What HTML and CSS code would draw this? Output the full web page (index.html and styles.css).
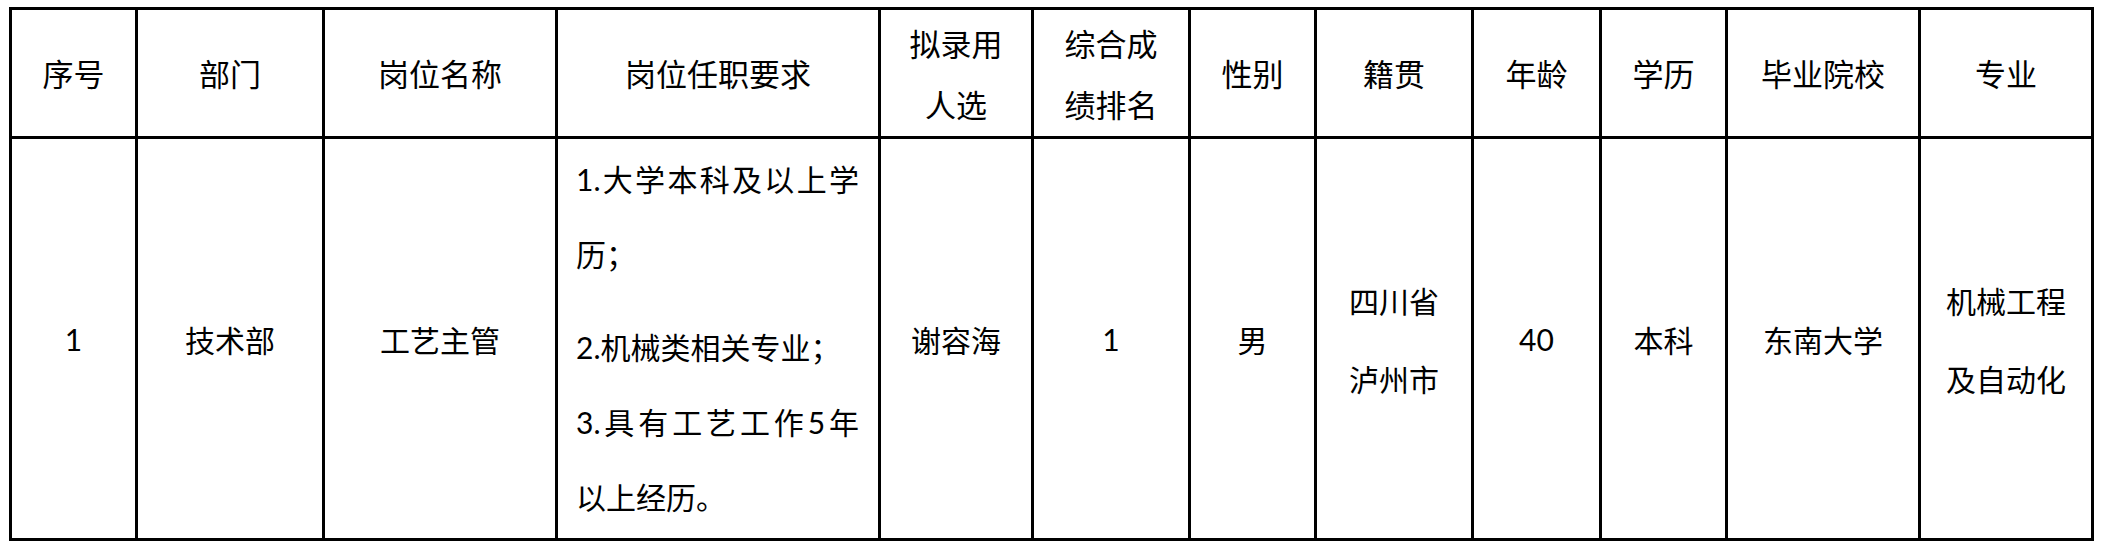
FILE: index.html
```html
<!DOCTYPE html>
<html lang="zh-CN">
<head>
<meta charset="utf-8">
<title>拟录用人选公示</title>
<link rel="stylesheet" href="styles.css">
</head>
<body>
<table class="sheet">
  <colgroup>
    <col class="col-no">
    <col class="col-dept">
    <col class="col-post">
    <col class="col-req">
    <col class="col-name">
    <col class="col-rank">
    <col class="col-sex">
    <col class="col-origin">
    <col class="col-age">
    <col class="col-edu">
    <col class="col-school">
    <col class="col-major">
  </colgroup>
  <thead>
    <tr>
      <th>序号</th>
      <th>部门</th>
      <th>岗位名称</th>
      <th>岗位任职要求</th>
      <th class="two">拟录用<br>人选</th>
      <th class="two">综合成<br>绩排名</th>
      <th>性别</th>
      <th>籍贯</th>
      <th>年龄</th>
      <th>学历</th>
      <th>毕业院校</th>
      <th>专业</th>
    </tr>
  </thead>
  <tbody>
    <tr>
      <td class="num">1</td>
      <td>技术部</td>
      <td>工艺主管</td>
      <td class="req">
        <div class="req-line req-line--justify">1.大学本科及以上学</div>
        <div class="req-line">历；</div>
        <div class="req-line req-line--gap">2.机械类相关专业；</div>
        <div class="req-line req-line--justify">3.具有工艺工作5年</div>
        <div class="req-line">以上经历。</div>
      </td>
      <td>谢容海</td>
      <td class="num">1</td>
      <td>男</td>
      <td class="two">四川省<br>泸州市</td>
      <td class="num">40</td>
      <td>本科</td>
      <td>东南大学</td>
      <td class="two">机械工程<br>及自动化</td>
    </tr>
  </tbody>
</table>
</body>
</html>
```

FILE: styles.css
```css
html, body {
  margin: 0;
  padding: 0;
  background: #ffffff;
}

body {
  padding: 7px 0 0 9px;
}

.sheet {
  table-layout: fixed;
  width: 2085px;
  border-collapse: separate;
  border-spacing: 3px;
  background: #000000;
  font-family: "Noto Sans CJK SC", sans-serif;
  color: #000000;
}

.col-no { width: 123px; }
.col-dept { width: 184px; }
.col-post { width: 230px; }
.col-req { width: 320px; }
.col-name { width: 150px; }
.col-rank { width: 154px; }
.col-sex { width: 123px; }
.col-origin { width: 154px; }
.col-age { width: 125px; }
.col-edu { width: 123px; }
.col-school { width: 190px; }
.col-major { width: 170px; }

.sheet th,
.sheet td {
  background: #ffffff;
  padding: 0;
  text-align: center;
  vertical-align: middle;
  white-space: nowrap;
  box-sizing: border-box;
}

.sheet th {
  height: 126px;
  font-size: 31px;
  font-weight: normal;
  line-height: 40px;
}

.sheet th.two {
  line-height: 61px;
}

.sheet td {
  height: 399px;
  font-size: 30px;
  line-height: 40px;
}

.sheet td.num {
  font-family: "Lato", "Noto Sans CJK SC", sans-serif;
}

.sheet td.two {
  line-height: 78px;
}

.sheet td.req {
  text-align: left;
  padding: 0 19px 0 18px;
  font-family: "Lato", "Noto Sans CJK SC", sans-serif;
}

.req-line {
  line-height: 75px;
}

.req-line--gap {
  margin-top: 18px;
}

.req-line--justify {
  text-align: justify;
  text-align-last: justify;
}
```
